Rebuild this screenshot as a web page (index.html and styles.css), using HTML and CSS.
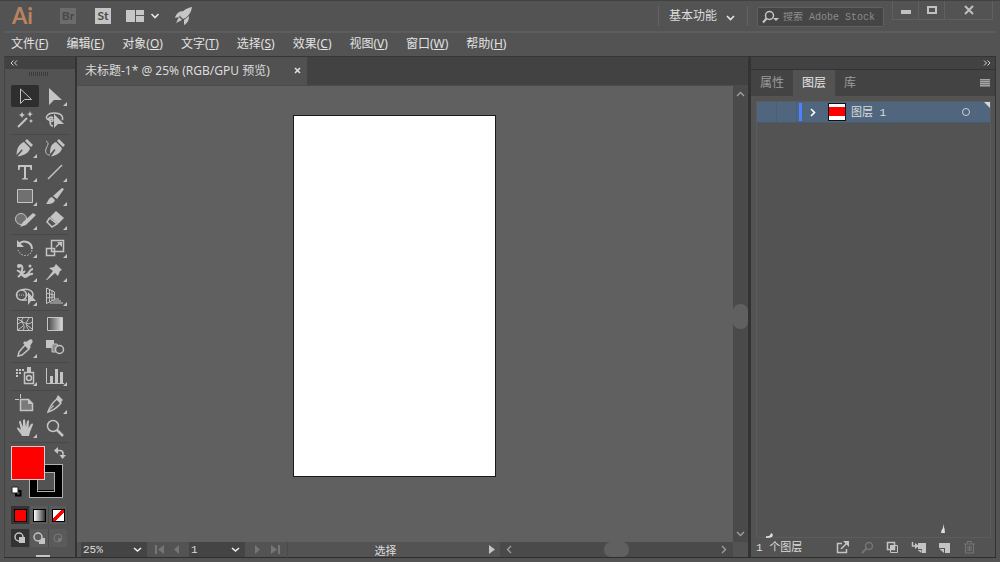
FILE: index.html
```html
<!DOCTYPE html>
<html lang="zh-CN">
<head>
  <meta charset="UTF-8" />
  <meta name="viewport" content="width=device-width, initial-scale=1" />
  <title>未标题-1</title>
  <link rel="stylesheet" href="styles.css">
</head>
<body>

  <header class="topbar">
    <span class="logo">Ai</span>
    <button class="app-btn off">Br</button>
    <button class="app-btn">St</button>
    <button class="arrange" aria-label="排列文档">
      <svg width="34" height="12" viewBox="0 0 34 12"><path d="M0 0h9v12H0zM10 0h8v5h-8zM10 6h8v6h-8z" fill="#c6c6c6"/><path d="M25.500 4l3.500 3.500 3.500-3.500" fill="none" stroke="#e6e6e6" stroke-width="1.600"/></svg>
    </button>
    <button class="rocket" aria-label="GPU 性能">
      <svg width="18" height="18" viewBox="0 0 18 18"><path d="M17 0C11 1 7 4 5 9l3 3C13 10 16 6 17 0zM8 4C4 4 1 7 0 11l4-1zM14 9l-5 4v5c4-2 5-5 5-9zM4 10l-3 6 6-3z" fill="#c6c6c6"/></svg>
    </button>

    <button class="workspace">基本功能
      <svg width="9" height="6" viewBox="0 0 9 6"><path d="M1 1l3.500 3.500L8 1" fill="none" stroke="#e6e6e6" stroke-width="1.600"/></svg>
    </button>
    <label class="search">
      <svg width="18" height="14" viewBox="0 0 18 14"><circle cx="7.500" cy="5.500" r="4" fill="none" stroke="#c6c6c6" stroke-width="1.500"/><path d="M4.500 8.500L1 12.500" stroke="#c6c6c6" stroke-width="2"/><path d="M11 8h6l-3 3z" fill="#c6c6c6"/></svg>
      <input type="text" placeholder="搜索 Adobe Stock" aria-label="搜索 Adobe Stock">
    </label>
    <div class="win-btns">
      <button aria-label="最小化"><svg width="12" height="10"><path d="M1 5h10v4H1z" fill="#c0c0c0"/></svg></button>
      <button aria-label="最大化"><svg width="12" height="10"><path d="M2 2h8v6H2z" fill="none" stroke="#c0c0c0" stroke-width="2"/></svg></button>
      <button aria-label="关闭"><svg width="12" height="10"><path d="M2 1l8 8M10 1L2 9" stroke="#c0c0c0" stroke-width="2"/></svg></button>
    </div>
  </header>

  <nav class="menubar">
    <a href="#">文件(<u>F</u>)</a>
    <a href="#">编辑(<u>E</u>)</a>
    <a href="#">对象(<u>O</u>)</a>
    <a href="#">文字(<u>T</u>)</a>
    <a href="#">选择(<u>S</u>)</a>
    <a href="#">效果(<u>C</u>)</a>
    <a href="#">视图(<u>V</u>)</a>
    <a href="#">窗口(<u>W</u>)</a>
    <a href="#">帮助(<u>H</u>)</a>
  </nav>

  <main class="work">

    <!-- Tools -->
    <aside class="tools">
      <button class="collapse" aria-label="折叠"><svg width="8" height="6"><path d="M3.500 .5L1 3l2.500 2.500M7 .5L4.500 3 7 5.500" fill="none" stroke="#d0d0d0"/></svg></button>
      <div class="grip"></div>

      <div class="group">
        <button class="tool active" aria-label="选择"><svg viewBox="0 0 22 20"><path d="M6.500 3v14.500l4-4h7z" class="ln"/></svg></button>
        <button class="tool more" aria-label="直接选择"><svg viewBox="0 0 22 20"><path d="M5 2v17l5-5h8z"/></svg></button>
        <button class="tool" aria-label="魔棒"><svg viewBox="0 0 22 20"><path d="M4 17L13 8" class="ln w2"/><path d="M8 2l1 2 2 1-2 1-1 2-1-2-2-1 2-1zM16 1l1 2.500 2 .5-2 1-1 2-1-2-2-1 2-.5zM17 9l.7 1.300 1.300.7-1.300.7-.7 1.300-.7-1.300-1.300-.7 1.300-.7z"/></svg></button>
        <button class="tool" aria-label="套索"><svg viewBox="0 0 22 20"><path d="M5 10c-3-1-3-3-2-4 2-4 12-4 15 0 1 2 1 3 0 4M9 8c-2-2-5 0-4 2s4 2 4 0-3-1-3 1 0 5 3 5" class="ln w15"/><path d="M10 4v14l4-4h6z"/></svg></button>
      </div>
      <div class="group">
        <button class="tool more" aria-label="钢笔"><svg viewBox="0 0 22 20"><path d="M13 1l6 6-2 2-6-6zM10 4l6 6c-1 5-5 7-12.500 8.500l5.500-6.500-1-1-5.500 6C3 10 5 6 10 4z"/><circle cx="9.500" cy="11" r="1.500"/></svg></button>
        <button class="tool" aria-label="曲率"><svg viewBox="0 0 22 20"><path d="M15 1l6 6-2 2-6-6zM12 4l6 6c-1 5-5 7-11 8.500l4.500-6.500-1-1L6 16C6 10 7 6 12 4z"/><path d="M2 3c4 2 1 5 0 8s0 6 4 6" class="ln"/></svg></button>
        <button class="tool more" aria-label="文字"><svg viewBox="0 0 22 20"><path d="M4 3h14v5h-1.500L16 5h-4v11l2 .5v1H8v-1l2-.5V5H6l-.5 3H4z"/></svg></button>
        <button class="tool more" aria-label="直线段"><svg viewBox="0 0 22 20"><path d="M4 17L18 3" class="ln w15"/></svg></button>
        <button class="tool more" aria-label="矩形"><svg viewBox="0 0 22 20"><path d="M3.500 3.500h15v13h-15z" fill="#707070" stroke="#c4c4c4"/></svg></button>
        <button class="tool more" aria-label="画笔"><svg viewBox="0 0 22 20"><path d="M18 2l2 1-7 10-4-3zM8 11l3 3c-1 4-5 4-9 4 2-2 2-6 6-7z"/></svg></button>
        <button class="tool more" aria-label="Shaper"><svg viewBox="0 0 22 20"><circle cx="7" cy="9" r="5.500" fill="#707070" stroke="#c4c4c4"/><path d="M19 3l3 2L12 15l-6 2 3-5z"/></svg></button>
        <button class="tool more" aria-label="橡皮擦"><svg viewBox="0 0 22 20"><path d="M12 1l8 7-6 6-8-7z"/><path d="M5.500 8L3 12l5 5 5-3z" class="ln w15"/></svg></button>
      </div>
      <div class="group">
        <button class="tool more" aria-label="旋转"><svg viewBox="0 0 22 20"><path d="M5 6c4-5 13-2 13 5" class="ln w2"/><path d="M3 2v7h7z"/><path d="M18 12c-1 7-11 8-14 0" class="ln" stroke-dasharray="1.500 1.500"/></svg></button>
        <button class="tool more" aria-label="比例缩放"><svg viewBox="0 0 22 20"><path d="M7.500 2.500h12v11h-12zM2.500 10.500h8v7h-8zM12 9l4-4" class="ln w15"/><path d="M13 4h5v5z"/></svg></button>
        <button class="tool more" aria-label="宽度"><svg viewBox="0 0 22 20"><path d="M4 4c4-2 5 1 4 4s0 6 4 5 3-6 7-6M3 9c3-2 5 6 8 6s4-4 8-3M4 15l7-6" class="ln w2"/><circle cx="5" cy="4" r="2"/><circle cx="16" cy="4" r="1.500"/></svg></button>
        <button class="tool more" aria-label="操控变形"><svg viewBox="0 0 22 20"><path d="M12 2l6 6-2 1-2 5-3-3-8 7-1 0 7-9-4-3 5-1z"/></svg></button>
        <button class="tool more" aria-label="形状生成器"><svg viewBox="0 0 22 20"><circle cx="7.500" cy="9" r="5" class="ln w15"/><path d="M7 4c6-2 12 0 12 5 0 2-1 3-2 4M8 14h5" class="ln w15"/><path d="M3 9h11" class="ln" stroke-dasharray="1 1"/><path d="M14 6v13l3-4h5z"/></svg></button>
        <button class="tool more" aria-label="透视网格"><svg viewBox="0 0 22 20"><path d="M2.500 2v15.500l8-4V6zM2 7l8 2M2 12l8-1M5.500 3v13M8 4v11M11 13h4M9 15h8M6 17h13" class="ln"/></svg></button>
      </div>
      <div class="group">
        <button class="tool" aria-label="网格"><svg viewBox="0 0 22 20"><path d="M3.500 3.500h15v13h-15zM4 10c5-5 9 3 14-2M9 4c-4 4 4 7 0 12M15 4c-3 4-4 8 0 12M4 5l5 3M4 16l5-4M18 15l-5-4" class="ln"/></svg></button>
        <button class="tool" aria-label="渐变"><svg viewBox="0 0 22 20"><defs><linearGradient id="gr"><stop stop-color="#444"/><stop offset="1" stop-color="#ddd"/></linearGradient></defs><path d="M3.500 3.500h15v13h-15z" fill="url(#gr)" stroke="#c4c4c4"/></svg></button>
        <button class="tool more" aria-label="吸管"><svg viewBox="0 0 22 20"><path d="M11 7l4 4-7 6-4 1 1-4z" class="ln w15"/><path d="M15 2c2-2 5 1 3 3l-2 3 1 1-2 2-6-6 2-2 1 1z"/></svg></button>
        <button class="tool" aria-label="混合"><svg viewBox="0 0 22 20"><path d="M2 2h8v8H2z"/><path d="M8 6h5l2 3-3 5H8z" fill="#8a8a8a" stroke="#c4c4c4"/><circle cx="15.500" cy="11.500" r="4" fill="#535353" stroke="#c4c4c4" stroke-width="1.500"/></svg></button>
      </div>
      <div class="group">
        <button class="tool more" aria-label="符号喷枪"><svg viewBox="0 0 22 20"><path d="M10.500 6.500h9v11h-9z" class="ln w15"/><circle cx="15" cy="12" r="2.500" class="ln w15"/><path d="M13 1h4v5h-4zM2 3h2v2H2zM5 3h2v2H5zM8 3h2v2H8zM2 6h2v2H2zM5 6h2v2H5zM2 9h2v2H2z"/></svg></button>
        <button class="tool more" aria-label="柱形图"><svg viewBox="0 0 22 20"><path d="M2.500 2v15.500H20" class="ln"/><path d="M6 10h3v7H6zM11 3h3v14h-3zM16 6h3v11h-3z"/></svg></button>
      </div>
      <div class="group">
        <button class="tool" aria-label="画板"><svg viewBox="0 0 22 20"><path d="M6.500 0v4M1 5.500h4" class="ln"/><path d="M6.500 5.500h8l4 4v7h-12z" fill="#7a7a7a" stroke="#c4c4c4" stroke-width="1.500"/><path d="M14 5v5h5z"/></svg></button>
        <button class="tool more" aria-label="切片"><svg viewBox="0 0 22 20"><path d="M13 5l4 4c-3 4-7 7-13 9 2-6 5-10 9-13z" class="ln w15"/><path d="M14 1l5 5-3 3-4-4zM4 18l5-7 1 1z"/></svg></button>
        <button class="tool more" aria-label="抓手"><svg viewBox="0 0 22 20"><path d="M8 18C7 15 3 12 3 10c1-1 2 0 4 2L5 4c1-2 2-1 2 0l2 5V2c1-1 2-1 2 0l1 7 1-6c1-1 2-1 2 0l-.5 7L17 6c1-1 2-.5 2 .5L16 14l-1 4z"/></svg></button>
        <button class="tool" aria-label="缩放"><svg viewBox="0 0 22 20"><circle cx="9" cy="8" r="5.500" class="ln w15"/><path d="M13 12l6 6" class="ln w25"/></svg></button>
      </div>

      <div class="colors">
        <button class="stroke" aria-label="描边"></button>
        <button class="fill" aria-label="填色"></button>
        <button class="swap" aria-label="互换"><svg width="12" height="12"><path d="M3 3.500h3q3 0 3 3V9" class="ln w15"/><path d="M4 0v7L0 3.500zM5.500 8H12l-3.500 4z"/></svg></button>
        <button class="reset" aria-label="默认"><svg width="11" height="11"><path d="M5 5h4.500v4.500H5z" fill="none" stroke="#000" stroke-width="2"/><path d="M1 1h6v6H1z" fill="#fff" stroke="#222"/></svg></button>
      </div>
      <div class="trio">
        <button class="on" aria-label="颜色"><i class="sw red"></i></button>
        <button aria-label="渐变"><i class="sw grad"></i></button>
        <button aria-label="无"><i class="sw none"></i></button>
      </div>
      <div class="trio">
        <button class="on" aria-label="正常绘图"><svg width="14" height="14"><circle cx="6" cy="6" r="4" class="ln w15"/><path d="M6 6h6v6H6z"/></svg></button>
        <button aria-label="背面绘图"><svg width="14" height="14"><path d="M7 7h6v6H7z"/><circle cx="6" cy="6" r="4" fill="#5c5c5c" stroke="#c4c4c4" stroke-width="1.500"/></svg></button>
        <button class="dim" aria-label="内部绘图"><svg width="14" height="14"><circle cx="7" cy="7" r="4" class="ln"/><path d="M7 7h3v3H7z"/></svg></button>
      </div>
      <div class="screen"></div>
    </aside>

    <!-- Document -->
    <section class="doc">
      <div class="tabbar">
        <div class="tab">未标题-1* @ 25% (RGB/GPU 预览)
          <button aria-label="关闭"><svg width="8" height="8"><path d="M1 1l5 5M6 1L1 6" stroke="#e0e0e0" stroke-width="1.600"/></svg></button>
        </div>
      </div>
      <div class="view">
        <div class="canvas"><div class="artboard"></div></div>
        <div class="vscroll">
          <svg width="9" height="6"><path d="M1 5l3.500-3.500L8 5" class="arr"/></svg>
          <div class="thumb"></div>
          <svg width="9" height="6"><path d="M1 1l3.500 3.500L8 1" class="arr"/></svg>
        </div>
      </div>
      <div class="status">
        <select class="zoom" aria-label="缩放"><option>25%</option></select>
        <button class="nav" aria-label="首项"><svg width="10" height="9"><path d="M0 0h2v9H0zM9 0v9L3 4.500z"/></svg></button>
        <button class="nav" aria-label="上一项"><svg width="10" height="9"><path d="M7 0v9L2 4.500z"/></svg></button>
        <select class="page" aria-label="画板"><option>1</option></select>
        <button class="nav" aria-label="下一项"><svg width="10" height="9"><path d="M2 0v9l5-4.500z"/></svg></button>
        <button class="nav" aria-label="末项"><svg width="10" height="9"><path d="M1 0v9l6-4.500zM8 0h2v9H8z"/></svg></button>
        <span class="current">选择</span>
        <button class="play" aria-label="显示"><svg width="6" height="9"><path d="M0 0v9l6-4.500z"/></svg></button>
        <div class="hscroll">
          <svg width="6" height="9"><path d="M5 1L1.500 4.500 5 8" class="arr"/></svg>
          <div class="thumb"></div>
          <svg width="6" height="9"><path d="M1 1l3.500 3.500L1 8" class="arr"/></svg>
        </div>
        <div class="corner"></div>
      </div>
    </section>

    <!-- Layers -->
    <aside class="panel">
      <button class="expand" aria-label="折叠"><svg width="8" height="6"><path d="M1 .5L3.500 3 1 5.500M4.500 .5L7 3 4.500 5.500" fill="none" stroke="#d0d0d0"/></svg></button>
      <div class="ptabs">
        <button>属性</button>
        <button class="on">图层</button>
        <button>库</button>
        <button class="pmenu" aria-label="菜单"><svg width="10" height="8"><path d="M0 0h10v8H0z" fill="#777"/><path d="M0 .5h10M0 2.500h10M0 4.500h10M0 6.500h10" stroke="#a4a4a4"/></svg></button>
      </div>
      <div class="layers">
        <div class="layer">
          <span class="eye"></span>
          <span class="lock"></span>
          <span class="mark"></span>
          <svg class="arrow" width="6" height="9"><path d="M1 1l3.500 3.500L1 8" fill="none" stroke="#fff" stroke-width="1.600"/></svg>
          <span class="thumbnail"></span>
          <span class="name">图层 1</span>
          <button class="target" aria-label="定位"></button>
        </div>
        <svg class="mask" width="186" height="16"><path d="M5 11q3 1 1 4-2 1-6 1v-2q4 1 5-3zM177 2q2 5 2 9h-4q0-3 2-5z" fill="#e0e0e0"/></svg>
      </div>
      <div class="pfoot">
        <span class="count">1 个图层</span>
        <button aria-label="收集以导出"><svg width="13" height="13"><path d="M6 2.500H1.500v9h9V8M5 8l6-6" class="ln w15"/><path d="M7 0h6v6z"/></svg></button>
        <button class="dim" aria-label="定位对象"><svg width="13" height="13"><circle cx="8" cy="5" r="3.500" class="ln w15"/><path d="M5.500 7.500L1 12" class="ln w2"/></svg></button>
        <button aria-label="剪切蒙版"><svg width="13" height="13"><path d="M1.500 1.500h7v7h-7z" class="ln w15"/><path d="M4.500 4.500h7v7h-7z" class="ln"/><path d="M4 4h5v5H4z"/></svg></button>
        <button aria-label="新建子图层"><svg width="15" height="13"><path d="M1.500 1v4H5" class="ln w15"/><path d="M4 2l4 3-4 3zM7 2h8v10h-4V8H7z"/><path d="M6.500 9h4v3z"/></svg></button>
        <button aria-label="新建图层"><svg width="13" height="13"><path d="M1 2h11v10H7V7H1z"/><path d="M1.500 8H6v4z"/></svg></button>
        <button class="dim" aria-label="删除"><svg width="13" height="13"><path d="M1 3h11M4.500 2.500v-2h4v2M2.500 3v9h8V3M5 5v5M6.500 5v5M8 5v5" class="ln"/></svg></button>
      </div>
    </aside>

  </main>

</body>
</html>
```
FILE: styles.css
```css
* {
  box-sizing: border-box;
}

body {
  margin: 0;
  height: 100vh;
  display: flex;
  flex-direction: column;
  overflow: hidden;
  padding: 0 4px 4px;
  background: #535353;
  border-top: 1px solid #414141;
  color: #dcdcdc;
  font: 12px/16px "Noto Sans", "Noto Sans CJK SC", sans-serif;
}

button {
  border: none;
  padding: 0;
  background: none;
  color: inherit;
  font: inherit;
}

svg {
  display: block;
  fill: #c4c4c4;
}

.ln {
  fill: none;
  stroke: #c4c4c4;
}

.w15 { stroke-width: 1.5; }
.w2 { stroke-width: 2; }
.w25 { stroke-width: 2.5; }

.arr {
  fill: none;
  stroke: #a0a0a0;
  stroke-width: 1.3;
}

/* top bar */
.topbar {
  flex: none;
  height: 32px;
  display: flex;
  align-items: center;
  border-bottom: 2px solid #5c5c5c;
}

.logo {
  width: 48px;
  margin-right: 8px;
  padding-left: 8px;
  color: #b9835f;
  font-family: Lato, sans-serif;
  font-size: 22px;
  font-weight: 700;
}

.app-btn {
  width: 16px;
  height: 16px;
  margin-right: 19px;
  background: #c4c4c4;
  color: #4a4a4a;
  font-family: Lato, sans-serif;
  font-size: 12px;
  font-weight: 700;
}

.app-btn.off {
  background: #6c6c6c;
  color: #484848;
}

.app-btn + .arrange {
  margin-left: -4px;
}

.rocket {
  margin-left: 15px;
}

.workspace {
  height: 20px;
  margin-left: auto;
  padding: 0 12px 0 10px;
  display: flex;
  align-items: center;
  gap: 9px;
  border-left: 1px solid #636363;
  border-right: 1px solid #636363;
}

.workspace svg {
  margin-top: 4px;
}

.search {
  width: 127px;
  height: 20px;
  margin: 2px 8px 0 9px;
  padding-left: 4px;
  display: flex;
  align-items: center;
  gap: 3px;
  background: #454545;
  border: 1px solid #606060;
  border-radius: 2px;
}

.search input {
  flex: 1;
  min-width: 0;
  padding: 0;
  border: none;
  background: none;
  color: #dcdcdc;
  font: 10px "Liberation Mono", "Noto Sans CJK SC", monospace;
}

.search input::placeholder {
  color: #8c8c8c;
}

.win-btns {
  align-self: flex-start;
  display: flex;
  margin-right: 3px;
  border: 1px solid #606060;
  border-top: none;
}

.win-btns button {
  width: 26px;
  height: 18px;
  padding: 0 7px;
  border-right: 1px solid #606060;
}

.win-btns button:last-child {
  width: 47px;
  padding: 0 18px;
  border: none;
}

/* menu */
.menubar {
  flex: none;
  height: 23px;
  display: flex;
  align-items: center;
  gap: 18px;
  padding: 0 7px 2px;
}

.menubar a {
  color: #e2e2e2;
  text-decoration: none;
}

.work {
  flex: 1;
  min-height: 0;
  display: flex;
  border-bottom: 1px solid #2e2e2e;
}

/* tools */
.tools {
  width: 73px;
  flex: none;
  border-left: 1px solid #444;
  border-right: 2px solid #333;
  border-top: 1px solid #3a3a3a;
  overflow: hidden;
}

.collapse {
  width: 100%;
  height: 12px;
  padding-left: 5px;
  display: flex;
  align-items: center;
  background: #424242;
}

.grip {
  width: 19px;
  height: 4px;
  margin: 3px auto 9px 24px;
  background: repeating-linear-gradient(90deg, #3c3c3c 0 1px, #535353 1px 2px);
}

.group {
  width: 58px;
  margin-left: 6px;
  padding-bottom: 3px;
  margin-bottom: 2px;
  display: grid;
  grid-template-columns: 28px 28px;
  gap: 2px;
  border-bottom: 1px solid #484848;
}

.tool {
  position: relative;
  height: 22px;
  display: grid;
  place-items: center;
  border-radius: 2px;
}

.tool svg {
  width: 22px;
  height: 20px;
}

.tool.active {
  background: #2e2e2e;
}

.tool.more::after {
  content: "";
  position: absolute;
  right: 2px;
  bottom: 1px;
  border-left: 4px solid transparent;
  border-bottom: 4px solid #c4c4c4;
}

.colors {
  position: relative;
  height: 57px;
  margin: 3px 0 0 6px;
}

.fill,
.stroke,
.swap,
.reset {
  position: absolute;
}

.fill {
  left: 0;
  top: 0;
  width: 34px;
  height: 34px;
  background: #f00;
  border: 1px solid #d0d0d0;
}

.stroke {
  left: 18px;
  top: 18px;
  width: 34px;
  height: 34px;
  background: #535353;
  border: 8px solid #000;
  outline: 1px solid #b0b0b0;
  outline-offset: -1px;
}

.stroke::after {
  content: "";
  display: block;
  height: 18px;
  border: 1px solid #b0b0b0;
}

.swap {
  left: 43px;
  top: 1px;
}

.reset {
  left: 0;
  top: 40px;
}

.trio {
  width: 57px;
  height: 18px;
  margin: 3px 0 5px 6px;
  display: grid;
  grid-template-columns: repeat(3, 1fr);
  background: #5a5a5a;
  border-radius: 2px;
}

.trio button {
  display: grid;
  place-items: center;
  border-right: 1px solid #4a4a4a;
}

.trio .on {
  background: #333;
}

.dim {
  opacity: 0.3;
}

.sw {
  width: 13px;
  height: 13px;
  border: 1px solid #000;
}

.sw.red { background: #f00; }
.sw.grad { background: linear-gradient(90deg, #fff, #333); }
.sw.none { background: linear-gradient(135deg, #fff 40%, #f00 40% 60%, #fff 60%); }

.screen {
  width: 14px;
  height: 4px;
  margin: 8px 0 0 31px;
  background: #c4c4c4;
}

/* document */
.doc {
  flex: 1;
  min-width: 0;
  display: flex;
  flex-direction: column;
}

.tabbar {
  height: 30px;
  flex: none;
  display: flex;
  background: #424242;
  border-top: 1px solid #363636;
  border-bottom: 1px solid #4b4b4b;
}

.tab {
  min-width: 230px;
  display: flex;
  align-items: center;
  justify-content: space-between;
  padding: 0 5px 0 8px;
  background: #515151;
}

.view {
  flex: 1;
  min-height: 0;
  display: flex;
}

.canvas {
  flex: 1;
  position: relative;
  background: #606060;
}

.artboard {
  position: absolute;
  left: 216px;
  top: 29px;
  width: 203px;
  height: 362px;
  background: #fff;
  border: 1px solid #1a1a1a;
}

.vscroll {
  width: 15px;
  display: flex;
  flex-direction: column;
  align-items: center;
  justify-content: space-between;
  padding: 5px 0;
  background: #4a4a4a;
}

.vscroll .thumb {
  width: 15px;
  height: 25px;
  margin-top: 4px;
  border-radius: 7px;
  background: #606060;
}

.status {
  height: 15px;
  flex: none;
  display: flex;
  align-items: center;
  padding-left: 4px;
  font: 11px/14px "Liberation Mono", "Noto Sans CJK SC", monospace;
}

.status select {
  height: 15px;
  padding: 0 2px;
  appearance: none;
  border: none;
  background: #444 url("data:image/svg+xml,%3Csvg xmlns='http://www.w3.org/2000/svg' width='9' height='6'%3E%3Cpath d='M1 1l3.500 3L8 1' fill='none' stroke='%23eee' stroke-width='1.600'/%3E%3C/svg%3E") no-repeat right 5px center;
  color: #dcdcdc;
  font: inherit;
}

.status .zoom {
  width: 66px;
  margin-right: 8px;
}

.status .page {
  width: 56px;
  margin-right: 8px;
}

.nav {
  margin-right: 7px;
}

.nav svg {
  fill: #757575;
}

.current {
  flex: 1;
  padding-top: 4px;
  text-align: center;
  border-left: 1px solid #4a4a4a;
}

.play {
  padding: 0 5px 0 6px;
}

.hscroll {
  width: 233px;
  height: 15px;
  display: flex;
  align-items: center;
  justify-content: space-between;
  padding: 0 6px;
  background: #4a4a4a;
}

.hscroll .thumb {
  width: 25px;
  height: 15px;
  border-radius: 7px;
  background: #606060;
}

.corner {
  width: 15px;
}

/* right panel */
.panel {
  width: 248px;
  flex: none;
  display: flex;
  flex-direction: column;
  border: solid #333;
  border-width: 1px 1px 0 3px;
}

.expand {
  height: 12px;
  padding-right: 4px;
  display: flex;
  align-items: center;
  justify-content: flex-end;
  background: #424242;
}

.ptabs {
  height: 27px;
  display: flex;
  background: #434343;
  border-top: 1px solid #333;
  color: #9c9c9c;
}

.ptabs button {
  padding: 0 9px;
}

.ptabs .on {
  background: #535353;
  color: #e6e6e6;
}

.ptabs .pmenu {
  margin-left: auto;
  padding: 0 5px;
}

.layers {
  flex: 1;
  position: relative;
  margin: 5px 4px 0 5px;
  border: 1px solid #5c5c5c;
}

.layer {
  height: 21px;
  display: flex;
  align-items: center;
  background: #50667e;
  position: relative;
  border-bottom: 1px solid #485a6e;
}

.layer::after {
  content: "";
  position: absolute;
  right: 0;
  top: 0;
  border-left: 6px solid transparent;
  border-top: 6px solid #d8d8d8;
}

.eye,
.lock {
  width: 20px;
  height: 20px;
  border-right: 1px solid #4a5e74;
}

.mark {
  width: 3px;
  height: 18px;
  margin: 0 8px 0 2px;
  background: #4f80ff;
}

.thumbnail {
  width: 18px;
  height: 18px;
  margin: 0 5px 0 12px;
  border: 1px solid #111;
  background: linear-gradient(#fff 3px, #f00 3px 12px, #fff 12px);
}

.name {
  padding-top: 2px;
  font: 11px/16px "Liberation Mono", "Noto Sans CJK SC", monospace;
}

.target {
  width: 8px;
  height: 8px;
  margin: 0 20px 0 auto;
  border: 1px solid #d0d0d0;
  border-radius: 50%;
}

.mask {
  position: absolute;
  left: 9px;
  bottom: -1px;
}

.pfoot {
  height: 19px;
  display: flex;
  align-items: center;
  gap: 12px;
  padding: 0 19px 0 5px;
}

.count {
  margin-right: auto;
  font: 11px/14px "Liberation Mono", "Noto Sans CJK SC", monospace;
}
```
